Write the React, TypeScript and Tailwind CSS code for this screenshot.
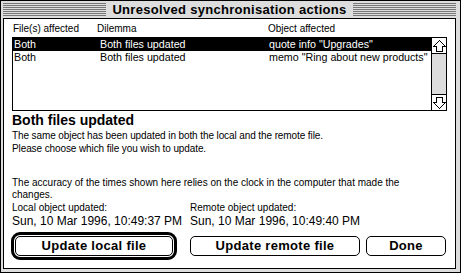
const stripes = [0, 1, 2, 3, 4, 5, 6];

function Stripes() {
  return (
    <div className="flex-1 flex flex-col gap-px py-[2px]">
      {stripes.map((i) => (
        <div key={i} className="h-px bg-[#777777]" />
      ))}
    </div>
  );
}

function Arrow({ down }: { down?: boolean }) {
  return (
    <svg width="13" height="12" viewBox="0 0 13 12" shapeRendering="crispEdges" className={down ? "rotate-180" : ""}>
      <path d="M6.5 0.5 L12.5 6.5 H9.5 V11.5 H3.5 V6.5 H0.5 Z" fill="white" stroke="black" strokeWidth="1" />
    </svg>
  );
}

export default function App() {
  return (
    <div className="w-[461px] h-[273px] flex flex-col border border-black bg-[#dddddd] pl-[2px] pr-[4px] pb-[3px] font-['Liberation_Sans',Arial,sans-serif] text-black whitespace-nowrap">
      <div className="h-[17px] flex items-stretch">
        <Stripes />
        <div className="px-[6px] text-[13px] font-bold leading-[17px] tracking-[0.3px]">Unresolved synchronisation actions</div>
        <Stripes />
      </div>
      <div className="flex-1 border border-black bg-white flex flex-col px-[8px] pt-[4px]">
        <div className="grid grid-cols-[84px_171px_1fr] h-[14px] pl-[1px] text-[10px] leading-[12px]">
          <div>File(s) affected</div>
          <div>Dilemma</div>
          <div>Object affected</div>
        </div>
        <div className="h-[74px] border border-black flex">
          <div className="flex-1 flex flex-col text-[10.7px] leading-[13px]">
            <div className="grid grid-cols-[86px_169px_1fr] pl-[1px] bg-black text-white h-[13px]">
              <div>Both</div>
              <div>Both files updated</div>
              <div>quote info "Upgrades"</div>
            </div>
            <div className="grid grid-cols-[86px_169px_1fr] pl-[1px] h-[13px]">
              <div>Both</div>
              <div>Both files updated</div>
              <div>memo "Ring about new products"</div>
            </div>
          </div>
          <div className="w-[15px] border-l border-black flex flex-col bg-[#dddddd]">
            <div className="h-[16px] border-b border-black bg-white flex items-center justify-center">
              <Arrow />
            </div>
            <div className="flex-1" />
            <div className="h-[16px] border-t border-black bg-white flex items-center justify-center">
              <Arrow down />
            </div>
          </div>
        </div>
        <div className="mt-[2px] text-[14px] font-bold leading-[15px]">Both files updated</div>
        <div className="mt-[1px] text-[10px] leading-[13px] tracking-[-0.1px]">
          <div>The same object has been updated in both the local and the remote file.</div>
          <div>Please choose which file you wish to update.</div>
        </div>
        <div className="mt-[22px] text-[10px] leading-[12px]">
          <div>The accuracy of the times shown here relies on the clock in the computer that made the</div>
          <div>changes.</div>
        </div>
        <div className="mt-[1px] grid grid-cols-[178px_1fr]">
          <div>
            <div className="text-[10px] leading-[12px]">Local object updated:</div>
            <div className="text-[12px] leading-[14px]">Sun, 10 Mar 1996, 10:49:37 PM</div>
          </div>
          <div>
            <div className="text-[10px] leading-[12px]">Remote object updated:</div>
            <div className="text-[12px] leading-[14px]">Sun, 10 Mar 1996, 10:49:40 PM</div>
          </div>
        </div>
        <div className="mt-[4px] flex items-center">
          <div className="-ml-[1px] w-[166px] h-[28px] border-[3px] border-black rounded-[9px] p-px">
            <div className="h-full border border-black rounded-[5px] flex items-center justify-center text-[13px] font-bold tracking-[0.3px]">Update local file</div>
          </div>
          <div className="ml-[13px] w-[170px] h-[20px] border border-black rounded-[5px] flex items-center justify-center text-[13px] font-bold tracking-[0.3px]">Update remote file</div>
          <div className="ml-[6px] w-[80px] h-[20px] border border-black rounded-[5px] flex items-center justify-center text-[13px] font-bold tracking-[0.3px]">Done</div>
        </div>
      </div>
    </div>
  );
}
